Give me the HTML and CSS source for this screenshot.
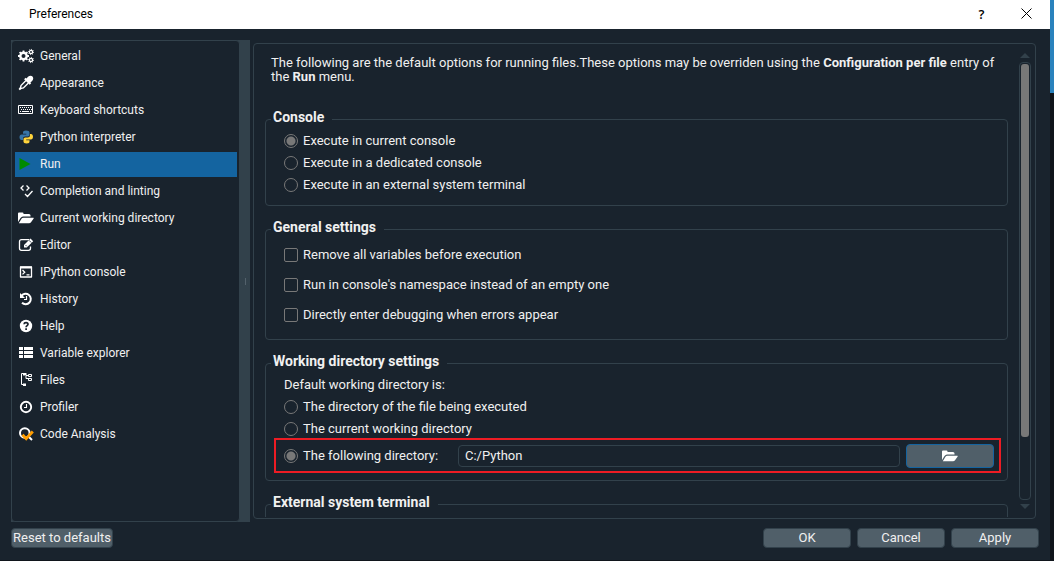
FILE: index.html
```
<!DOCTYPE html>
<html lang="en">
<head>
    <meta charset="UTF-8">
    <meta name="viewport" content="width=device-width, initial-scale=1.0">
    <title>Preferences</title>
    <link rel="stylesheet" href="styles.css">
</head>
<body>

<div class="screen">
<div class="dialog">
    <header class="titlebar">
        <h1 class="title">Preferences</h1>
        <button class="title-button" type="button" aria-label="Help">?</button>
        <button class="title-button" type="button" aria-label="Close">
            <svg width="11" height="11" viewBox="0 0 11 11"><path d="M.5 .5l10 10M10.5 .5l-10 10" stroke="#000" fill="none"/></svg>
        </button>
    </header>

    <main class="main">
        <!-- Category list -->
        <nav class="sidebar">
            <ul class="nav-list">
                <li><a class="nav-item" href="#">
                    <svg class="icon" viewBox="0 0 16 16"><circle cx="5.500" cy="8" r="3.300" fill="none" stroke="#fff" stroke-width="2.200"/><path d="M5.500 2.500v11M0 8h11M1.600 4.100l7.800 7.800M9.400 4.100l-7.800 7.800" stroke="#fff" stroke-width="1.800"/><circle cx="5.500" cy="8" r="2" fill="#19232d"/><g fill="none" stroke="#fff"><circle cx="13" cy="4" r="1.600" stroke-width="1.300"/><circle cx="13" cy="12" r="1.600" stroke-width="1.300"/><circle cx="13" cy="4" r="2.600" stroke-dasharray="1 1"/><circle cx="13" cy="12" r="2.600" stroke-dasharray="1 1"/></g></svg>
                    General</a></li>
                <li><a class="nav-item" href="#">
                    <svg class="icon" viewBox="0 0 16 16"><path d="M10 1.800c1.500-1.500 3.500-1.400 4.500-.4s1.100 3-.4 4.500l-1.700 1.500 .8 .9-1.500 1.500-5.600-5.600L7.600 2.700l.9 .8z" fill="#fff"/><path d="M8 5.500l-5 5-.4 2L1.500 14l.4 .4 1.500-1.100 2-.4 5-5" fill="none" stroke="#fff" stroke-width="1.400"/></svg>
                    Appearance</a></li>
                <li><a class="nav-item" href="#">
                    <svg class="icon" viewBox="0 0 16 16"><path d="M.5 3.500h14v8H.5z" fill="none" stroke="#fff"/><path d="M2 5.500h12M3 7.500h11" stroke="#fff" stroke-dasharray="1 1"/><path d="M2 9.500h1M4 9.500h7M12 9.500h1" stroke="#fff"/></svg>
                    Keyboard shortcuts</a></li>
                <li><a class="nav-item" href="#">
                    <svg class="icon" viewBox="0 0 16 16"><path d="M8 1.500c-2.500 0-3 1-3 2v1.300h3.300v.7H3.600C2.200 5.500 1.500 6.800 1.500 8.300s.8 2.700 2 2.700H5V9.500C5 8.200 6 7.500 7.200 7.500h2.600c1 0 1.700-.8 1.700-1.700V3.500c0-1.200-1.200-2-3.500-2z" fill="#3775a9"/><path d="M8.500 14.500c2.500 0 3-1 3-2v-1.300H8.200v-.7h4.700c1.400 0 2.100-1.300 2.100-2.800S14.200 5 13 5h-1v1.500c0 1.300-1 2-2.200 2H7.200c-1 0-1.700 .8-1.700 1.700v2.300c0 1.200 1 2 3 2z" fill="#ffd43b"/></svg>
                    Python interpreter</a></li>
                <li><a class="nav-item active" href="#" aria-current="page">
                    <svg class="icon" viewBox="0 0 16 16"><path d="M1.500 2l11 6-11 6z" fill="#008a00"/></svg>
                    Run</a></li>
                <li><a class="nav-item" href="#">
                    <svg class="icon" viewBox="0 0 16 16"><path d="M5.500 2.500L3 5l2.500 2.500M8.500 2.500L11 5 8.500 7.500M7 11l2.500 2.500L14.500 8" fill="none" stroke="#fff" stroke-width="1.300"/></svg>
                    Completion and linting</a></li>
                <li><a class="nav-item" href="#">
                    <svg class="icon" viewBox="0 0 16 16"><path d="M0 12V3.500Q0 2.500 1 2.500h3.500q1 0 1 1V4H11q1.500 0 1.500 1.500V6.500H5Q3.500 6.500 2.500 8zM.8 13.200L3.500 8.800Q4 7.700 5.500 7.700h10q.5 .3 0 1L13 12.200q-.7 1-2 1z" fill="#fff"/></svg>
                    Current working directory</a></li>
                <li><a class="nav-item" href="#">
                    <svg class="icon" viewBox="0 0 16 16"><path d="M11 2.700H3.500q-2 0-2 2v6.600q0 2 2 2h7q2 0 2-2V9.500" fill="none" stroke="#fff" stroke-width="1.300"/><path d="M12.500 1.500l2.700 2.700-6.400 6.400H6V8z" fill="#fff"/><path d="M7.500 8l1.300 1.300M11 3.300l2.300 2.300" stroke="#19232d" stroke-width=".8"/></svg>
                    Editor</a></li>
                <li><a class="nav-item" href="#">
                    <svg class="icon" viewBox="0 0 16 16"><path d="M2.500 3h11v10h-11z" fill="none" stroke="#fff" stroke-width="1.300" stroke-linejoin="round"/><path d="M2 3.500h12" stroke="#fff" stroke-width="2"/><path d="M4.500 6l2.200 2.200-2.200 2.200M8.500 10.800h3" fill="none" stroke="#fff" stroke-width="1.300"/></svg>
                    IPython console</a></li>
                <li><a class="nav-item" href="#">
                    <svg class="icon" viewBox="0 0 16 16"><path d="M3.500 4.800A5.200 5.200 0 1 1 4 11.800" fill="none" stroke="#fff" stroke-width="2"/><path d="M2 2v5h5z" fill="#fff"/><path d="M8.500 5v3.500H6" fill="none" stroke="#fff" stroke-width="1.200"/></svg>
                    History</a></li>
                <li><a class="nav-item" href="#">
                    <svg class="icon" viewBox="0 0 16 16"><circle cx="8" cy="8" r="6.200" fill="#fff"/><path d="M6 6.300C6.200 4 10 4.200 10 6.300 10 7.700 8.100 7.600 8.100 9.300M8.100 10.200v1.800" fill="none" stroke="#19232d" stroke-width="1.700"/></svg>
                    Help</a></li>
                <li><a class="nav-item" href="#">
                    <svg class="icon" viewBox="0 0 16 16"><path d="M1 2h4v3H1zM6 2h9v3H6zM1 6h4v3H1zM6 6h9v3H6zM1 10h4v3H1zM6 10h9v3H6z" fill="#fff"/></svg>
                    Variable explorer</a></li>
                <li><a class="nav-item" href="#">
                    <svg class="icon" viewBox="0 0 16 16"><path d="M6 1.500H3.500v11H6M6 1v3M8 1v5.500h3M8 3.500h3" fill="none" stroke="#fff"/><path d="M5 1h3v2H5zM5 11.500h3v2.500H5z" fill="#fff"/><path d="M10.500 2.500h3v2h-3zM10.500 6.500h3v2h-3z" fill="none" stroke="#fff"/></svg>
                    Files</a></li>
                <li><a class="nav-item" href="#">
                    <svg class="icon" viewBox="0 0 16 16"><circle cx="8" cy="8" r="5.200" fill="none" stroke="#fff" stroke-width="1.900"/><path d="M8.500 5v3.500H6" fill="none" stroke="#fff" stroke-width="1.100"/></svg>
                    Profiler</a></li>
                <li><a class="nav-item" href="#">
                    <svg class="icon" viewBox="0 0 16 16"><circle cx="6.800" cy="7" r="4.800" fill="none" stroke="#fff" stroke-width="2"/><path d="M10 10l4 4" stroke="#fff" stroke-width="2"/><path d="M4.500 8.800l3.700 4L14.800 5.500" fill="none" stroke="#ff9d00" stroke-width="2.800"/></svg>
                    Code Analysis</a></li>
            </ul>
            <div class="splitter"></div>
        </nav>

        <!-- Settings for the selected category -->
        <section class="panel">
            <div class="content">
                <p class="intro">The following are the default options for running files.These options may be overriden using the <b>Configuration per file</b> entry of the <b>Run</b> menu.</p>

                <fieldset class="group">
                    <legend>Console</legend>
                    <label class="option"><input type="radio" name="console" checked>Execute in current console</label>
                    <label class="option"><input type="radio" name="console">Execute in a dedicated console</label>
                    <label class="option"><input type="radio" name="console">Execute in an external system terminal</label>
                </fieldset>

                <fieldset class="group">
                    <legend>General settings</legend>
                    <label class="option check"><input type="checkbox">Remove all variables before execution</label>
                    <label class="option check"><input type="checkbox">Run in console's namespace instead of an empty one</label>
                    <label class="option check"><input type="checkbox">Directly enter debugging when errors appear</label>
                </fieldset>

                <fieldset class="group">
                    <legend>Working directory settings</legend>
                    <p class="option">Default working directory is:</p>
                    <label class="option"><input type="radio" name="cwd">The directory of the file being executed</label>
                    <label class="option"><input type="radio" name="cwd">The current working directory</label>
                    <div class="directory-row">
                        <label class="option directory-label"><input type="radio" name="cwd" checked>The following directory:</label>
                        <input class="directory-input" type="text" value="C:/Python" aria-label="Directory">
                        <button class="button browse" type="button" aria-label="Select directory">
                            <svg class="icon" viewBox="0 0 16 16"><path d="M0 12V3.500Q0 2.500 1 2.500h3.500q1 0 1 1V4H11q1.500 0 1.500 1.500V6.500H5Q3.500 6.500 2.500 8zM.8 13.200L3.500 8.800Q4 7.700 5.500 7.700h10q.5 .3 0 1L13 12.200q-.7 1-2 1z" fill="#fff"/></svg>
                        </button>
                    </div>
                </fieldset>

                <fieldset class="group">
                    <legend>External system terminal</legend>
                    <div class="option"></div>
                </fieldset>
            </div>
            <div class="scrollbar">
                <div class="arrow arrow-up"></div>
                <div class="track"><div class="thumb"></div></div>
                <div class="arrow arrow-down"></div>
            </div>
        </section>
    </main>

    <footer class="footer">
        <button class="button reset" type="button">Reset to defaults</button>
        <button class="button" type="button">OK</button>
        <button class="button" type="button">Cancel</button>
        <button class="button" type="button">Apply</button>
    </footer>
</div>
<div class="desktop"></div>
</div>

</body>
</html>
```
FILE: styles.css
```
* {
    box-sizing: border-box;
}
body {
    margin: 0;
    background-color: #10151b;
    color: #f0f0f0;
    font-family: Roboto, "Liberation Sans", sans-serif;
    font-size: 13px;
    line-height: 14px;
}
.screen {
    display: flex;
    height: 100vh;
}
.dialog {
    flex: 1;
    min-width: 0;
    display: flex;
    flex-direction: column;
    background-color: #19232d;
    border-bottom: 1px solid #10151b;
}
.desktop {
    width: 4px;
    background: linear-gradient(#2a82bd 93px, #10151b 93px);
}
.titlebar {
    display: flex;
    align-items: center;
    height: 29px;
    padding: 0 7px 2px 29px;
    background-color: white;
    color: black;
}
.title {
    flex: 1;
    margin: 0;
    font-size: 12px;
    font-weight: normal;
}
.title-button {
    width: 33px;
    height: 27px;
    margin-left: 12px;
    padding: 0;
    border: none;
    background: none;
    color: black;
    font-family: "Open Sans", sans-serif;
    font-size: 13px;
    font-weight: 600;
}
.main {
    flex: 1;
    min-height: 0;
    display: flex;
    gap: 3px;
    padding: 11px 14px 0 11px;
}
.sidebar {
    display: flex;
    width: 239px;
    background-color: #32414b;
}
.nav-list {
    flex: 1;
    display: flex;
    flex-direction: column;
    gap: 2px;
    margin: 0;
    padding: 3px 2px 3px 3px;
    list-style: none;
    border: 1px solid #32414b;
    border-radius: 4px;
    background-color: #19232d;
}
.nav-item {
    display: flex;
    align-items: center;
    gap: 6px;
    height: 25px;
    padding: 0 0 1px 3px;
    color: #f0f0f0;
    font-size: 12px;
    text-decoration: none;
}
.nav-item.active {
    background-color: #1464a0;
}
.icon {
    width: 16px;
    height: 16px;
}
.splitter {
    width: 10px;
    display: flex;
    align-items: center;
    justify-content: center;
}
.splitter::after {
    content: "";
    width: 1px;
    height: 7px;
    background-color: #53616b;
}
.panel {
    flex: 1;
    min-width: 0;
    display: flex;
    margin: 3px 0;
    border: 1px solid #32414b;
    border-radius: 4px;
}
.content {
    flex: 1;
    min-width: 0;
    overflow: hidden;
    margin: 1px 11px;
}
.intro {
    margin: 11px 6px 26px;
}
.group {
    margin: 0 0 14px;
    padding: 2px 6px 9px 18px;
    border: 1px solid #32414b;
    border-radius: 4px;
}
.group legend {
    margin-left: -13px;
    padding: 0 8px 4px 2px;
    font-size: 14px;
    font-weight: bold;
}
.option {
    display: flex;
    align-items: center;
    gap: 5px;
    height: 22px;
    margin: 0;
}
.check {
    height: 30px;
}
input[type="radio"],
input[type="checkbox"] {
    appearance: none;
    flex-shrink: 0;
    width: 14px;
    height: 14px;
    margin: 0;
    border: 1px solid #787878;
    border-radius: 2px;
}
input[type="radio"] {
    border-radius: 50%;
}
input[type="radio"]:checked {
    background: radial-gradient(circle, #787878 4px, transparent 5px);
}
.directory-row {
    display: flex;
    align-items: center;
    gap: 6px;
    height: 35px;
    margin: -2px 0 -2px -10px;
    padding: 0 5px 0 8px;
    border: 2px solid #ed1c24;
}
.directory-label {
    width: 168px;
}
.directory-input {
    flex: 1;
    height: 22px;
    padding: 0 6px;
    border: 1px solid #32414b;
    border-radius: 4px;
    background-color: #19232d;
    color: #f0f0f0;
    font: inherit;
}
.button {
    width: 88px;
    height: 20px;
    padding: 0;
    border: 1px solid #32414b;
    border-radius: 4px;
    background-color: #505f69;
    color: #f0f0f0;
    font: inherit;
}
.browse {
    display: flex;
    align-items: center;
    justify-content: center;
    height: 24px;
    border-color: #1464a0;
}
.scrollbar {
    display: flex;
    flex-direction: column;
    align-items: center;
    gap: 4px;
    width: 12px;
    margin: 9px 4px 9px 0;
}
.track {
    flex: 1;
    width: 12px;
    padding: 1px;
    border: 1px solid #32414b;
    border-radius: 4px;
}
.thumb {
    height: 86%;
    border-radius: 3px;
    background-color: #787878;
}
.arrow {
    border: 5px solid transparent;
}
.arrow-up {
    border-top: none;
    border-bottom-color: #32414b;
}
.arrow-down {
    border-bottom: none;
    border-top-color: #32414b;
}
.footer {
    display: flex;
    gap: 6px;
    padding: 6px 11px 12px;
}
.reset {
    width: 102px;
    margin-right: auto;
}
```
